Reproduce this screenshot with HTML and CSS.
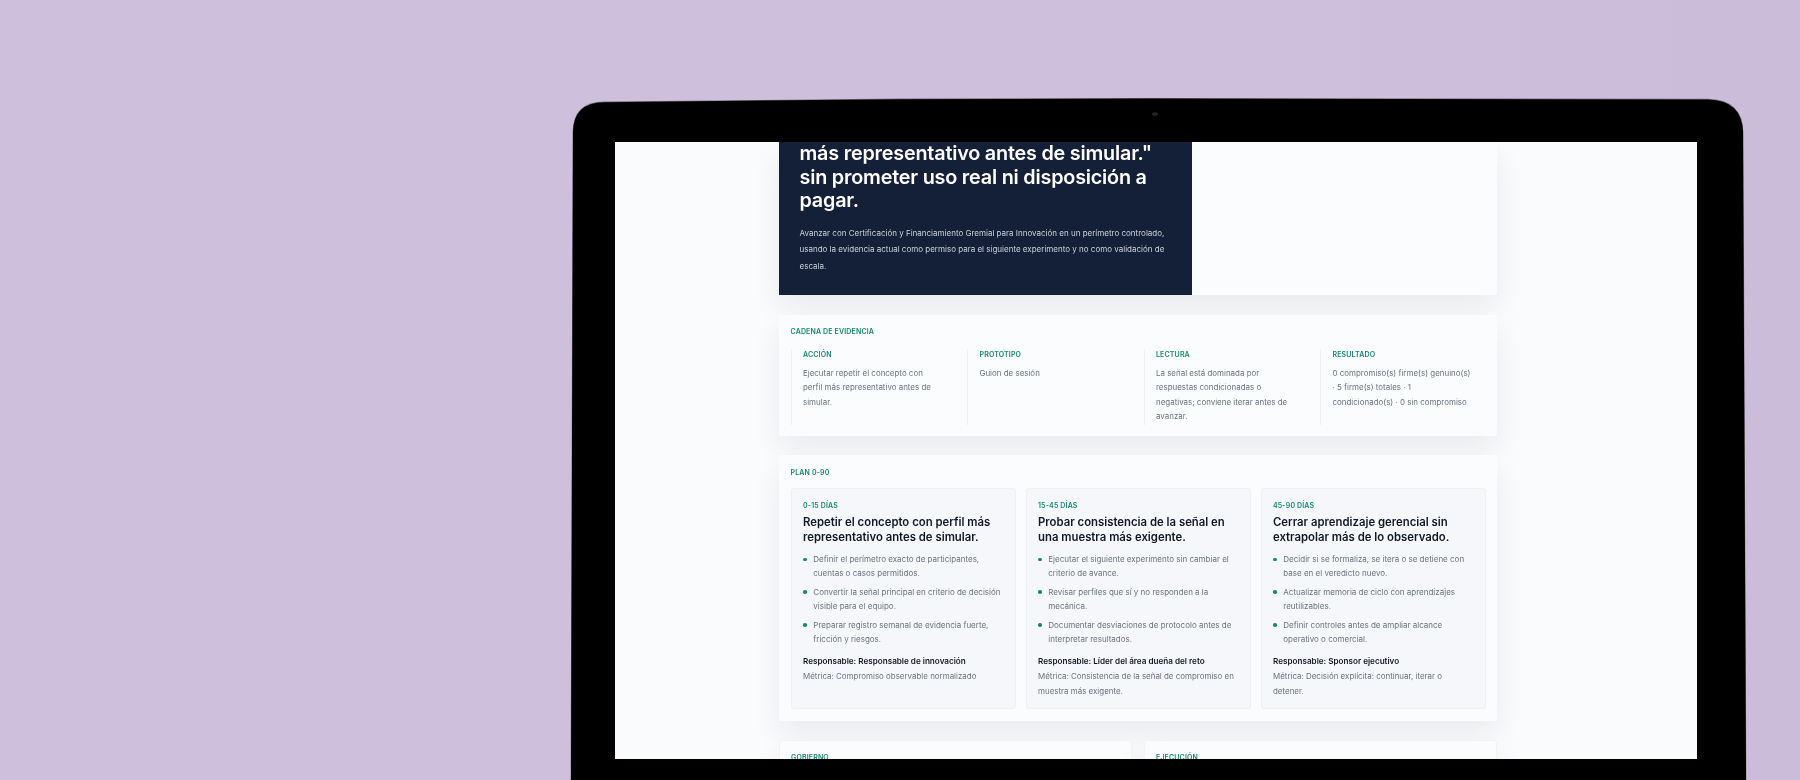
FILE: index.html
```html
<!DOCTYPE html>
<html lang="es">
<head>
<meta charset="utf-8">
<title>Plan de evidencia</title>
<link rel="stylesheet" href="styles.css">
</head>
<body>
<div class="stage">
  <svg class="laptop" width="1800" height="780" viewBox="0 0 1800 780" aria-hidden="true">
    <path class="laptop-edge" d="M570.6 780 L572.6 132 Q573 102 604 101.6 L900 98.6 L1150 98 L1708 98.8 Q1742.6 99.5 1743.4 132 L1746.4 780 Z"/>
    <path class="laptop-body" d="M571 780 L573 132 Q573.4 102.5 604 102.2 L900 99.2 L1150 98.6 L1708 99.4 Q1742 100 1743 132 L1746 780 Z"/>
    <ellipse class="laptop-cam" cx="1155" cy="114" rx="3" ry="1.8"/>
  </svg>
  <div class="screen">
    <main class="page">
      <section class="card hero">
        <div class="hero-dark">
          <h1>más representativo antes de simular." sin prometer uso real ni disposición a pagar.</h1>
          <p>Avanzar con Certificación y Financiamiento Gremial para Innovación en un perímetro controlado, usando la evidencia actual como permiso para el siguiente experimento y no como validación de escala.</p>
        </div>
      </section>

      <section class="card chain">
        <h2 class="eyebrow">CADENA DE EVIDENCIA</h2>
        <div class="chain-grid">
          <div class="chain-col">
            <h3 class="eyebrow">ACCIÓN</h3>
            <p>Ejecutar repetir el concepto con perfil más representativo antes de simular.</p>
          </div>
          <div class="chain-col">
            <h3 class="eyebrow">PROTOTIPO</h3>
            <p>Guion de sesión</p>
          </div>
          <div class="chain-col">
            <h3 class="eyebrow">LECTURA</h3>
            <p>La señal está dominada por respuestas condicionadas o negativas; conviene iterar antes de avanzar.</p>
          </div>
          <div class="chain-col">
            <h3 class="eyebrow">RESULTADO</h3>
            <p>0 compromiso(s) firme(s) genuino(s) · 5 firme(s) totales · 1 condicionado(s) · 0 sin compromiso</p>
          </div>
        </div>
      </section>

      <section class="card plan">
        <h2 class="eyebrow">PLAN 0-90</h2>
        <div class="plan-grid">
          <article class="plan-card">
            <div class="eyebrow">0-15 DÍAS</div>
            <h3>Repetir el concepto con perfil más representativo antes de simular.</h3>
            <ul>
              <li>Definir el perímetro exacto de participantes, cuentas o casos permitidos.</li>
              <li>Convertir la señal principal en criterio de decisión visible para el equipo.</li>
              <li>Preparar registro semanal de evidencia fuerte, fricción y riesgos.</li>
            </ul>
            <p class="owner">Responsable: Responsable de innovación</p>
            <p class="metric">Métrica: Compromiso observable normalizado</p>
          </article>
          <article class="plan-card">
            <div class="eyebrow">15-45 DÍAS</div>
            <h3>Probar consistencia de la señal en una muestra más exigente.</h3>
            <ul>
              <li>Ejecutar el siguiente experimento sin cambiar el criterio de avance.</li>
              <li>Revisar perfiles que sí y no responden a la mecánica.</li>
              <li>Documentar desviaciones de protocolo antes de interpretar resultados.</li>
            </ul>
            <p class="owner">Responsable: Líder del área dueña del reto</p>
            <p class="metric">Métrica: Consistencia de la señal de compromiso en muestra más exigente.</p>
          </article>
          <article class="plan-card">
            <div class="eyebrow">45-90 DÍAS</div>
            <h3>Cerrar aprendizaje gerencial sin extrapolar más de lo observado.</h3>
            <ul>
              <li>Decidir si se formaliza, se itera o se detiene con base en el veredicto nuevo.</li>
              <li>Actualizar memoria de ciclo con aprendizajes reutilizables.</li>
              <li>Definir controles antes de ampliar alcance operativo o comercial.</li>
            </ul>
            <p class="owner">Responsable: Sponsor ejecutivo</p>
            <p class="metric">Métrica: Decisión explícita: continuar, iterar o detener.</p>
          </article>
        </div>
      </section>

      <div class="bottom-row">
        <section class="card stub"><h2 class="eyebrow">GOBIERNO</h2></section>
        <section class="card stub"><h2 class="eyebrow">EJECUCIÓN</h2></section>
      </div>
    </main>
  </div>
</div>
</body>
</html>
```
FILE: styles.css
```css
* { box-sizing: border-box; }
html, body { margin: 0; padding: 0; }
body { background: #cec0dd; font-family: Inter, "Liberation Sans", sans-serif; }
h1, h2, h3, p, ul { margin: 0; padding: 0; }

.stage {
  position: relative;
  width: 1800px;
  height: 780px;
  overflow: hidden;
  background: linear-gradient(90deg, #cec0dd 0%, #cec0dd 70%, #cbbcd9 100%);
}
.laptop { position: absolute; left: 0; top: 0; }
.laptop-edge { fill: #77727a; }
.laptop-body { fill: #000; }
.laptop-cam { fill: #26262a; }

.screen {
  position: absolute;
  left: 615px;
  top: 142px;
  width: 1082px;
  height: 617px;
  overflow: hidden;
  background: #fafbfd;
}
.page {
  display: flex;
  flex-direction: column;
  gap: 19.6px;
  width: 718px;
  margin-left: 164px;
  filter: blur(0.4px);
}
.card {
  background: #fbfcfe;
  border-radius: 3px;
  box-shadow: 0 14px 30px rgba(15, 23, 42, 0.07);
}
.eyebrow {
  color: #128a6e;
  font-size: 7px;
  line-height: 10px;
  font-weight: 600;
  letter-spacing: 0.15px;
}

.hero { height: 153px; }
.hero-dark {
  width: 413px;
  height: 153px;
  padding: 0 20.5px;
  background: #141f38;
  color: #fff;
}
.hero-dark h1 {
  font-size: 19.8px;
  line-height: 23.6px;
  font-weight: 600;
  letter-spacing: -0.2px;
}
.hero-dark p {
  margin-top: 12px;
  color: #ccd2dc;
  font-size: 8px;
  line-height: 16.4px;
}

.chain { padding: 12px 0 11px 11.5px; height: 121px; }
.chain-grid {
  display: grid;
  grid-template-columns: repeat(4, 176.5px);
  margin-top: 12px;
  height: 76.5px;
}
.chain-col { border-left: 1px solid #eef0f4; padding: 1.5px 23px 0 11.5px; }
.chain-col p {
  margin-top: 6px;
  color: #6b7280;
  font-size: 7.95px;
  line-height: 14.2px;
}

.plan { padding: 12.5px 11.5px 12px; height: 265.5px; }
.plan-grid {
  display: grid;
  grid-template-columns: repeat(3, 225px);
  gap: 10px;
  margin-top: 10px;
}
.plan-card {
  height: 221px;
  padding: 12px 11.5px 0;
  background: #f6f7fb;
  border: 1px solid #eef0f4;
  border-radius: 3px;
}
.plan-card h3 {
  margin-top: 4.5px;
  color: #111827;
  font-size: 11.35px;
  line-height: 14.7px;
  font-weight: 600;
}
.plan-card ul {
  display: flex;
  flex-direction: column;
  gap: 4.6px;
  margin-top: 7.8px;
  list-style: none;
}
.plan-card li {
  position: relative;
  padding-left: 10.3px;
  color: #6b7280;
  font-size: 8px;
  line-height: 14.1px;
}
.plan-card li::before {
  content: "";
  position: absolute;
  left: 0;
  top: 5.2px;
  width: 3.6px;
  height: 3.6px;
  border-radius: 50%;
  background: #128a6e;
}
.owner {
  margin-top: 8px;
  color: #111827;
  font-size: 8.15px;
  line-height: 14.1px;
  font-weight: 600;
}
.metric {
  margin-top: 1px;
  color: #6b7280;
  font-size: 7.95px;
  line-height: 14.4px;
}

.bottom-row {
  display: grid;
  grid-template-columns: 353px 353px;
  gap: 12px;
}
.stub {
  height: 60px;
  padding: 12px 11px;
  border: 1px solid #f0f2f6;
}
```
